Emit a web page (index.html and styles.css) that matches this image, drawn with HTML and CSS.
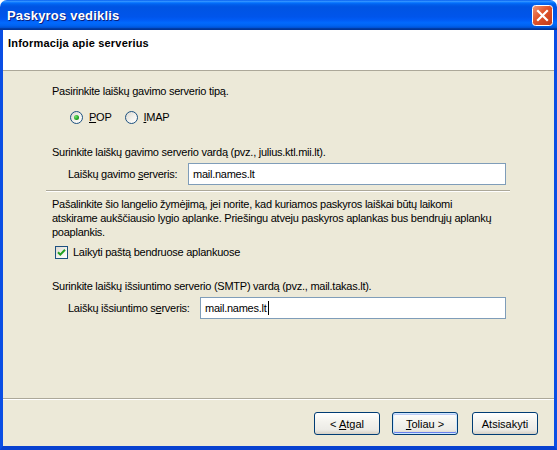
FILE: index.html
```html
<!DOCTYPE html>
<html>
<head>
<meta charset="utf-8">
<link rel="stylesheet" href="styles.css">
</head>
<body>
<div class="window">
  <div class="titlebar">
    <span class="title">Paskyros vediklis</span>
    <span class="close">
      <svg width="21" height="21" viewBox="0 0 21 21">
        <defs>
          <linearGradient id="cg" x1="0" y1="0" x2="1" y2="1">
            <stop offset="0" stop-color="#f29a79"/>
            <stop offset="0.45" stop-color="#e0532a"/>
            <stop offset="1" stop-color="#c2391a"/>
          </linearGradient>
        </defs>
        <rect x="0.5" y="0.5" width="20" height="20" rx="3" fill="url(#cg)" stroke="#ffffff"/>
        <path d="M6 6 L15 15 M15 6 L6 15" stroke="#ffffff" stroke-width="2.2" stroke-linecap="square"/>
      </svg>
    </span>
  </div>
  <div class="frame">
    <div class="header"><span class="header-title">Informacija apie serverius</span></div>
    <div class="content">
      <p class="line first">Pasirinkite laiškų gavimo serverio tipą.</p>
      <div class="radios">
        <span class="opt"><span class="radio checked"></span><span class="opt-text"><u>P</u>OP</span></span>
        <span class="opt"><span class="radio"></span><span class="opt-text"><u>I</u>MAP</span></span>
      </div>
      <p class="line gap">Surinkite laiškų gavimo serverio vardą (pvz., julius.ktl.mii.lt).</p>
      <div class="field">
        <span class="field-label">Laiškų gavimo <u>s</u>erveris:</span>
        <span class="input">mail.names.lt</span>
      </div>
      <div class="sep"></div>
      <p class="para">Pašalinkite šio langelio žymėjimą, jei norite, kad kuriamos paskyros laiškai būtų laikomi<br>atskirame aukščiausio lygio aplanke. Priešingu atveju paskyros aplankas bus bendrųjų aplankų<br>poaplankis.</p>
      <div class="check">
        <span class="box">
          <svg width="11" height="11" viewBox="0 0 11 11"><path d="M2 5.2 L4.3 7.6 L9 2.8" fill="none" stroke="#21a121" stroke-width="2"/></svg>
        </span>
        <span>Laikyti paštą bendruose aplankuose</span>
      </div>
      <p class="line gap2">Surinkite laiškų išsiuntimo serverio (SMTP) vardą (pvz., mail.takas.lt).</p>
      <div class="field">
        <span class="field-label wide">Laiškų išsiuntimo s<u>e</u>rveris:</span>
        <span class="input narrow">mail.names.lt<span class="caret"></span></span>
      </div>
    </div>
    <div class="footer">
      <button class="btn">&lt; <u>A</u>tgal</button>
      <button class="btn default"><u>T</u>oliau &gt;</button>
      <button class="btn cancel">Atsisakyti</button>
    </div>
  </div>
</div>
</body>
</html>
```

FILE: styles.css
```css
html, body {
  margin: 0;
  padding: 0;
  background: #ffffff;
}
body {
  font-family: "Liberation Sans", Arial, sans-serif;
  font-size: 11px;
  color: #000000;
}
.window {
  width: 557px;
  height: 450px;
  display: flex;
  flex-direction: column;
}
.titlebar {
  height: 30px;
  flex: none;
  border-radius: 7px 7px 0 0;
  background: linear-gradient(to bottom, #0058ee 0%, #3593ff 4%, #288eff 6%, #127dff 8%, #036ffc 10%, #0262ee 14%, #0057e5 20%, #0054e3 24%, #0055eb 56%, #005bf5 66%, #026afe 76%, #0062ef 86%, #0052d6 92%, #0040ab 94%, #003092 100%);
  display: flex;
  align-items: center;
  justify-content: space-between;
  padding: 0 4px 0 7px;
}
.title {
  color: #ffffff;
  font-weight: bold;
  font-size: 13px;
  letter-spacing: 0.2px;
  text-shadow: 1px 1px 0 #0a1e7a;
  padding-top: 1px;
}
.close {
  display: flex;
  width: 21px;
  height: 21px;
  margin-top: 1px;
}
.frame {
  flex: 1;
  display: flex;
  flex-direction: column;
  background: #ece9d8;
  border-left: 3px solid #0a4ee4;
  border-right: 3px solid #0a4ee4;
  border-bottom: 4px solid #0841d0;
}
.header {
  height: 41px;
  background: #ffffff;
  border-bottom: 1px solid #aca899;
  padding: 6px 0 0 5px;
  box-sizing: border-box;
  flex: none;
}
.header-title {
  font-weight: bold;
  line-height: 14px;
  letter-spacing: 0.2px;
}
.content {
  flex: 1;
  padding-left: 49px;
  letter-spacing: -0.25px;
}
.line, .para {
  margin: 0;
  line-height: 14px;
  white-space: nowrap;
}
.first { margin-top: 13px; }
.radios {
  display: flex;
  margin-top: 12px;
  padding-left: 18px;
  height: 14px;
  align-items: center;
}
.opt {
  display: flex;
  align-items: center;
  margin-right: 13px;
}
.opt-text { margin-left: 6px; }
.radio {
  width: 13px;
  height: 13px;
  box-sizing: border-box;
  border: 1px solid #1c5180;
  border-radius: 50%;
  background: linear-gradient(135deg, #dcd9d0 0%, #f5f4ef 60%, #ffffff 100%);
  display: flex;
  align-items: center;
  justify-content: center;
}
.radio.checked::after {
  content: "";
  width: 5px;
  height: 5px;
  border-radius: 50%;
  background: radial-gradient(circle at 35% 35%, #6fe36b 0%, #21a121 60%, #1a7f1a 100%);
}
.gap { margin-top: 21px; }
.field {
  display: flex;
  align-items: center;
  padding-left: 16px;
  margin-top: 4px;
}
.field-label {
  width: 120px;
  flex: none;
}
.field-label.wide { width: 132px; }
.input {
  width: 318px;
  height: 22px;
  box-sizing: border-box;
  border: 1px solid #7f9db9;
  background: #ffffff;
  padding-left: 4px;
  display: flex;
  align-items: center;
}
.input.narrow { width: 306px; }
.caret {
  display: inline-block;
  width: 1px;
  height: 14px;
  background: #000000;
  margin-left: 1px;
}
.sep {
  width: 464px;
  margin: 5px 0 0 -6px;
  border-top: 1px solid #aca899;
  border-bottom: 1px solid #ffffff;
}
.para { margin-top: 5px; }
.check {
  display: flex;
  align-items: center;
  margin-top: 6px;
  padding-left: 3px;
  height: 14px;
}
.box {
  width: 13px;
  height: 13px;
  box-sizing: border-box;
  border: 1px solid #1c5180;
  background: linear-gradient(135deg, #dcd9d0 0%, #f5f4ef 60%, #ffffff 100%);
  display: flex;
  margin-right: 5px;
}
.gap2 { margin-top: 20px; }
.footer {
  flex: none;
  height: 48px;
  box-sizing: border-box;
  border-top: 1px solid #aca899;
  box-shadow: inset 0 1px 0 #ffffff;
  padding: 13px 16px 0 0;
  display: flex;
  justify-content: flex-end;
  align-items: flex-start;
}
.btn {
  width: 66px;
  height: 23px;
  box-sizing: border-box;
  border: 1px solid #003c74;
  border-radius: 3px;
  background: linear-gradient(to bottom, #ffffff 0%, #f4f3ee 40%, #ecebe6 80%, #d6d0c5 100%);
  font-family: "Liberation Sans", Arial, sans-serif;
  font-size: 11px;
  color: #000000;
  padding: 0;
  margin-left: 12px;
}
.btn.default {
  box-shadow: inset 0 0 0 1px #cee7ff, inset 0 -1px 0 1px #6982ee, inset 0 1px 0 1px #bccbf5;
}
.btn.cancel { margin-left: 14px; }
```
